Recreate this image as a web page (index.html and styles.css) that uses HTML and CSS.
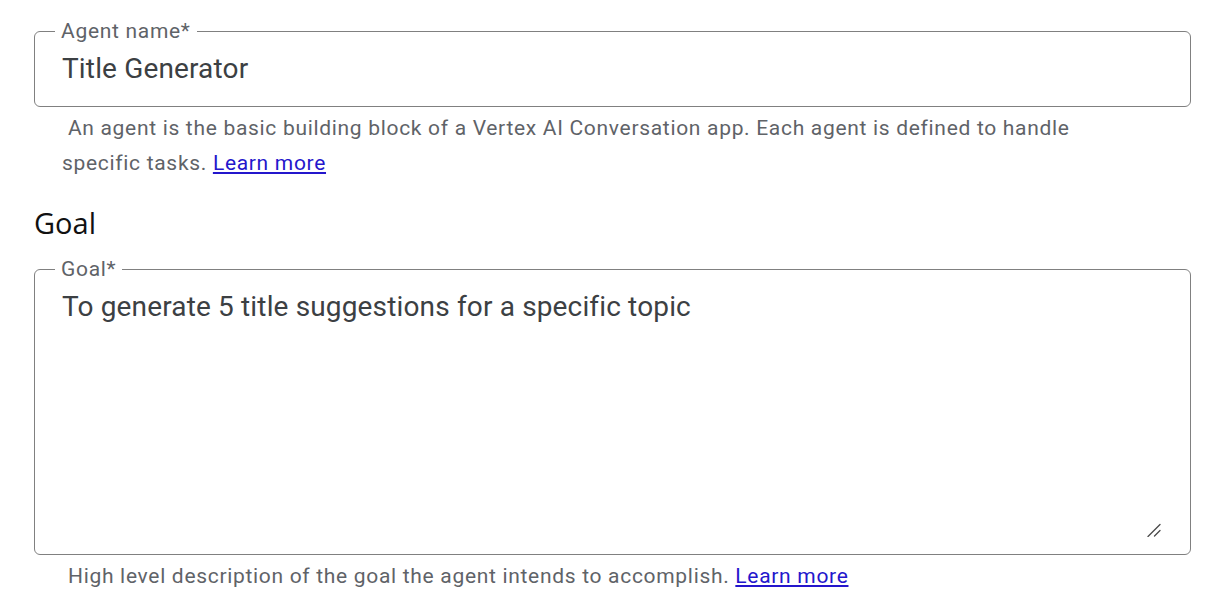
FILE: index.html
```html
<!DOCTYPE html>
<html>
<head>
<meta charset="utf-8">
<link rel="stylesheet" href="styles.css">
</head>
<body>
<div class="page">
  <fieldset class="field field-name">
    <legend class="field-label">Agent name*</legend>
    <div class="field-value">Title Generator</div>
  </fieldset>
  <p class="hint hint-name">&nbsp;An agent is the basic building block of a Vertex AI Conversation app. Each agent is defined to handle specific tasks. <a class="link" href="#">Learn more</a></p>
  <h2 class="section-title">Goal</h2>
  <fieldset class="field field-goal">
    <legend class="field-label">Goal*</legend>
    <div class="field-value">To generate 5 title suggestions for a specific topic</div>
    <svg class="resize" width="14" height="14" viewBox="0 0 14 14">
      <path d="M1 13.5 L13 1.5 M7.5 13 L13 7.5" stroke="#4a4a4a" stroke-width="1.3" fill="none" stroke-linecap="round"/>
    </svg>
  </fieldset>
  <p class="hint hint-goal">High level description of the goal the agent intends to accomplish. <a class="link" href="#">Learn more</a></p>
</div>
</body>
</html>
```
FILE: styles.css
```css
html, body {
  margin: 0;
  padding: 0;
  background: #fff;
}
body {
  font-family: Roboto, "Liberation Sans", sans-serif;
}
.page {
  padding: 19px 16px 0 34px;
}
.field {
  margin: 0;
  border: 1px solid #808080;
  border-radius: 6px;
  padding: 0 27px;
  min-width: 0;
  position: relative;
  box-sizing: border-box;
}
.field-label {
  padding: 0 6px;
  margin-left: -7px;
  font-size: 21px;
  letter-spacing: 0.7px;
  color: #5f6368;
  line-height: 24px;
}
.field-value {
  font-size: 28px;
  color: #3c4043;
  line-height: 34px;
  letter-spacing: 0.15px;
  padding-top: 9px;
}
.field-name {
  height: 88px;
}
.field-goal {
  height: 298px;
}
.resize {
  position: absolute;
  right: 29px;
  bottom: 17px;
}
.hint {
  margin: 0;
  font-size: 21px;
  letter-spacing: 0.69px;
  color: #5f6368;
  line-height: 35px;
}
.hint-name {
  padding: 4px 0 0 28px;
  width: 1070px;
}
.hint-goal {
  padding: 4px 0 0 34px;
}
.link {
  color: #2416cc;
  text-decoration: underline;
}
.section-title {
  margin: 25px 0 17px 0;
  font-size: 29px;
  font-weight: 400;
  color: #111;
  line-height: 34px;
  font-family: "Open Sans", Roboto, sans-serif;
}
```
